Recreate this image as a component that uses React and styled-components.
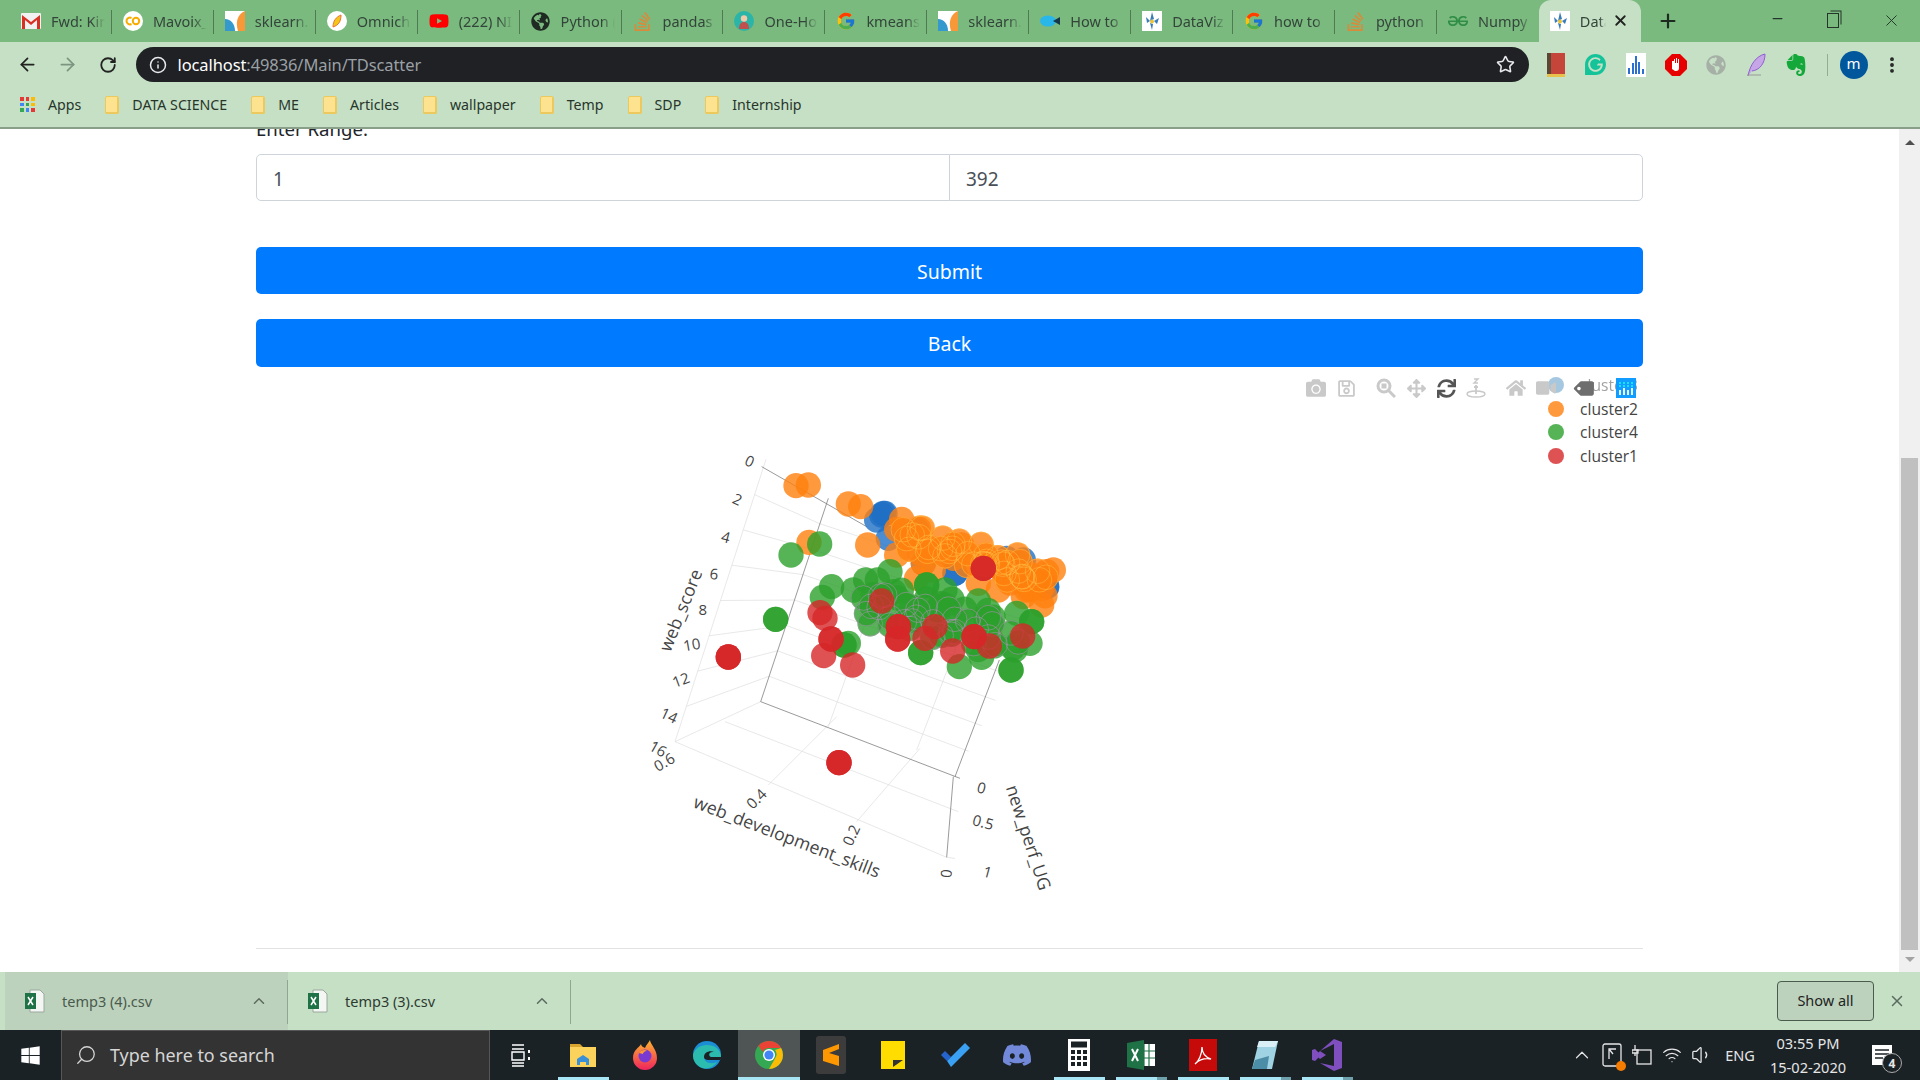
import React from "react";
import styled, { createGlobalStyle } from "styled-components";
import { ArrowLeft, ArrowRight, RotateCw, Info, Star, Plus, X, Minus, ChevronUp, EllipsisVertical, Search, Volume1, Wifi } from "lucide-react";
import { FaCamera, FaRegSave, FaHome, FaVideo, FaTag, FaSync, FaArrowsAlt, FaGlobeAmericas, FaYoutube, FaWindows } from "react-icons/fa";
import { FcGoogle } from "react-icons/fc";
import { SiStackoverflow, SiGeeksforgeeks, SiGrammarly, SiEvernote, SiDiscord } from "react-icons/si";

const UI = `"Noto Sans", "Open Sans", sans-serif`;

const Global = createGlobalStyle`
  html, body { margin: 0; padding: 0; height: 100%; overflow: hidden; background: #fff; }
  * { box-sizing: border-box; }
  #root { height: 1080px; }
`;

const Screen = styled.div`
  width: 1920px;
  height: 1080px;
  display: flex;
  flex-direction: column;
  font-family: ${UI};
  overflow: hidden;
`;

// browser chrome //
const TabStrip = styled.div`
  height: 42px;
  background: #7aba7e;
  display: flex;
  align-items: stretch;
  padding-left: 10px;
`;

const Tab = styled.div`
  width: ${(p) => (p.$active ? "102px" : "101.93px")};
  flex: none;
  display: flex;
  align-items: center;
  gap: 10px;
  padding-left: 11px;
  position: relative;
  background: ${(p) => (p.$active ? "#c5e0c5" : "transparent")};
  border-radius: ${(p) => (p.$active ? "12px 12px 0 0" : "0")};

  &::after {
    content: "";
    display: ${(p) => (p.$plain ? "none" : "block")};
    position: absolute;
    right: 0;
    top: 10px;
    bottom: 8px;
    width: 1px;
    background: #4f7a52;
  }
`;

const TabTitle = styled.span`
  font-size: 14.5px;
  color: #33443a;
  white-space: nowrap;
  width: ${(p) => (p.$active ? "26px" : "54px")};
  overflow: hidden;
  -webkit-mask-image: linear-gradient(to right, #000 75%, transparent);
  mask-image: linear-gradient(to right, #000 75%, transparent);
`;

const IconSlot = styled.span`
  width: 20px;
  height: 20px;
  flex: none;
  display: flex;
  align-items: center;
  justify-content: center;
`;

const TabClose = styled(X)`
  position: absolute;
  right: 12px;
  top: 12px;
  color: #222;
`;

const NewTab = styled.div`
  width: 54px;
  display: flex;
  align-items: center;
  justify-content: center;
  color: #1d2a20;
`;

const WindowButtons = styled.div`
  margin-left: auto;
  display: flex;
  color: #24352a;
`;

const WindowButton = styled.div`
  width: 57px;
  display: flex;
  align-items: flex-start;
  justify-content: center;
  padding-top: 11px;
`;

const RestoreIcon = styled.span`
  width: 12px;
  height: 15px;
  margin: 2px 4px 0 0;
  border: 1.5px solid #24352a;
  box-shadow: 2px -2px 0 -0.5px #7aba7e, 3px -3px 0 -0.5px #24352a;
`;

const Toolbar = styled.div`
  height: 45px;
  background: #c5e0c5;
  display: flex;
  align-items: center;
  padding: 0 0 0 7px;
`;

const NavButton = styled.div`
  width: 40.5px;
  display: flex;
  justify-content: center;
  color: ${(p) => (p.$off ? "#7d9580" : "#222")};
`;

const AddressBar = styled.div`
  width: 1393px;
  height: 35px;
  margin-left: 7px;
  border-radius: 18px;
  background: #202124;
  display: flex;
  align-items: center;
  padding: 0 14px 0 13px;
  color: #e8eaed;
`;

const Url = styled.div`
  margin-left: 11px;
  font-size: 16.5px;
  color: #9aa0a6;
  flex: 1;
  letter-spacing: -0.1px;
  b { font-weight: 400; color: #fff; }
`;

const Extensions = styled.div`
  display: flex;
  align-items: center;
  margin-left: 7px;
`;

const Extension = styled.div`
  width: 40px;
  height: 26px;
  display: flex;
  align-items: center;
  justify-content: center;
`;

const ToolDivider = styled.div`
  width: 1px;
  height: 22px;
  background: #94ab96;
  margin: 0 12px 0 11px;
`;

const Avatar = styled.div`
  width: 28px;
  height: 28px;
  border-radius: 50%;
  background: #01579b;
  color: #fff;
  font-size: 15px;
  display: flex;
  align-items: center;
  justify-content: center;
  padding-bottom: 3px;
`;

const MenuDots = styled.div`
  margin-left: 14px;
  color: #222;
  display: flex;
`;

const Bookmarks = styled.div`
  height: 42px;
  background: #c5e0c5;
  border-bottom: 2px solid #8a9f8a;
  display: flex;
  align-items: center;
  padding: 0 0 5px 20px;
  font-size: 14.2px;
  color: #28352b;
`;

const Bookmark = styled.div`
  display: flex;
  align-items: center;
  gap: 13px;
  margin-right: 24px;
  white-space: nowrap;
`;

const AppsGrid = styled.div`
  width: 15px;
  height: 15px;
  display: grid;
  grid-template-columns: repeat(3, 1fr);
  gap: 2px;
`;

const AppDot = styled.i`
  background: ${(p) => p.$c};
`;

const Folder = styled.span`
  width: 14px;
  height: 18px;
  background: #fde38f;
  border: 1px solid #ecc95e;
  border-radius: 2px 2px 1px 1px;
  box-shadow: inset -3px -3px 0 -2px #ecc95e;
`;

// page //
const Viewport = styled.div`
  flex: 1;
  min-height: 0;
  display: flex;
  background: #fff;
`;

const Page = styled.div`
  flex: 1;
  overflow: hidden;
  padding: 0 256px;
`;

const Form = styled.div`
  width: 1387px;
  margin-top: -15px;
`;

const Label = styled.div`
  font-size: 18.6px;
  line-height: 30px;
  color: #212529;
  margin-bottom: 10px;
`;

const InputGroup = styled.div`
  display: flex;
  margin-bottom: 46px;
`;

const Field = styled.input`
  flex: 1;
  width: 50%;
  height: 47px;
  border: 1px solid #ced4da;
  margin-left: ${(p) => (p.$second ? "-1px" : "0")};
  border-radius: ${(p) => (p.$second ? "0 5px 5px 0" : "5px 0 0 5px")};
  padding: 3px 16px 0;
  font: 19px ${UI};
  color: #495057;
  background: #fff;
  outline: none;
`;

const Button = styled.div`
  height: ${(p) => p.$h}px;
  margin-bottom: ${(p) => p.$mb}px;
  background: #007bff;
  border-radius: 5px;
  color: #fff;
  font-size: 19.5px;
  display: flex;
  align-items: center;
  justify-content: center;
  padding-top: ${(p) => p.$pt}px;
`;

const ChartBox = styled.div`
  position: relative;
  height: 582px;
  padding: 63px 0 0 384px;
  border-bottom: 1px solid #e2e2e2;
`;

const ModeBar = styled.div`
  position: absolute;
  top: 11px;
  right: 7px;
  display: flex;
  z-index: 2;
`;

const ModeGroup = styled.div`
  display: flex;
  gap: 10px;
  margin-left: ${(p) => (p.$first ? "0" : "20px")};
`;

const ModeIcon = styled.div`
  width: 20px;
  height: 20px;
  display: flex;
  align-items: center;
  justify-content: center;
  color: ${(p) => p.$c || "#c9c9c9"};
`;

const Legend = styled.div`
  position: absolute;
  top: 6px;
  left: 1292px;
  font-family: "Open Sans", sans-serif;
  font-size: 15.6px;
  color: #444;
`;

const LegendRow = styled.div`
  height: 23.7px;
  display: flex;
  align-items: center;
  gap: 16px;
  opacity: ${(p) => (p.$off ? 0.5 : 1)};
`;

const LegendDot = styled.span`
  width: 16px;
  height: 16px;
  border-radius: 50%;
  background: ${(p) => p.$c};
  opacity: 0.8;
`;

const Scrollbar = styled.div`
  width: 21px;
  background: #f0f0f0;
  display: flex;
  flex-direction: column;
  align-items: center;
  padding-top: 11px;
`;

const ArrowUp = styled.div`
  border: 5px solid transparent;
  border-top: 0;
  border-bottom: 5px solid #505050;
`;

const Thumb = styled.div`
  width: 17px;
  height: 492px;
  margin-top: 313px;
  background: #c0c0c0;
`;

const ArrowDown = styled.div`
  margin-top: 7px;
  border: 5px solid transparent;
  border-bottom: 0;
  border-top: 5px solid #a3a3a3;
`;

// downloads bar //
const Downloads = styled.div`
  height: 58px;
  background: #c5e0c5;
  display: flex;
  align-items: center;
  padding-left: 5px;
  font-size: 14.5px;
  color: #36453a;
`;

const DownloadItem = styled.div`
  width: 283px;
  height: 100%;
  flex: none;
  display: flex;
  align-items: center;
  padding: 0 0 0 20px;
  position: relative;
  background: ${(p) => (p.$hover ? "#bcd2bc" : "transparent")};

  &::after {
    content: "";
    position: absolute;
    right: 0;
    top: 8px;
    bottom: 6px;
    width: 1px;
    background: #8fa791;
  }
`;

const FileName = styled.span`
  margin-left: 17px;
  flex: 1;
  color: ${(p) => (p.$hover ? "#4a5a4e" : "#2e3a31")};
`;

const Chevron = styled(ChevronUp)`
  margin-right: 20px;
  color: #5d6b60;
`;

const ShowAll = styled.div`
  margin-left: auto;
  width: 97px;
  height: 40px;
  border: 1px solid #4b5c4e;
  border-radius: 4px;
  background: #bcd2bc;
  display: flex;
  align-items: center;
  justify-content: center;
  color: #222;
  font-size: 14.5px;
  padding-bottom: 2px;
`;

const CloseBar = styled(X)`
  margin: 0 14px 0 14px;
  color: #5d6b60;
`;

// taskbar //
const Taskbar = styled.div`
  height: 50px;
  background: #1b2226;
  display: flex;
  align-items: stretch;
  color: #fff;
`;

const StartButton = styled.div`
  width: 61px;
  display: flex;
  align-items: center;
  justify-content: center;
`;

const SearchBox = styled.div`
  width: 429px;
  background: #333;
  border: 1px solid #575757;
  border-bottom: 0;
  display: flex;
  align-items: center;
  padding: 0 0 2px 13px;
  gap: 13px;
  font-size: 17.9px;
  color: #d6d6d6;
`;

const TaskButton = styled.div`
  width: 62px;
  position: relative;
  display: flex;
  align-items: center;
  justify-content: center;
  background: ${(p) => (p.$active ? "#4f5455" : "transparent")};

  &::after {
    content: "";
    display: ${(p) => (p.$run ? "block" : "none")};
    position: absolute;
    bottom: 0;
    left: ${(p) => (p.$active ? "0" : "5.5px")};
    right: ${(p) => (p.$active ? "0" : "5.5px")};
    height: 3px;
    background: ${(p) =>
      p.$multi
        ? "linear-gradient(to right, #a9e6f5 80%, #6fa1ad 80%)"
        : "#a9e6f5"};
  }
`;

const Tray = styled.div`
  margin-left: auto;
  padding-right: 13px;
  display: flex;
  align-items: center;
  font-size: 14.5px;
  color: #e6e6e6;
`;

const TrayIcon = styled.div`
  width: 30px;
  display: flex;
  justify-content: center;
  position: relative;
`;

const TrayBadge = styled.i`
  position: absolute;
  right: 1px;
  bottom: -4px;
  width: 10px;
  height: 10px;
  border-radius: 50%;
  background: #f57c00;
`;

const Lang = styled.div`
  width: 46px;
  text-align: center;
`;

const Clock = styled.div`
  width: 90px;
  text-align: center;
  line-height: 24px;
  font-size: 14.6px;
`;

const Notify = styled.div`
  width: 50px;
  margin-left: 4px;
  position: relative;
  display: flex;
  justify-content: center;
`;

const NotifyCount = styled.span`
  position: absolute;
  left: 25px;
  top: 8px;
  width: 20px;
  height: 20px;
  border-radius: 50%;
  background: #1b2226;
  border: 1px solid #aaa;
  font-size: 12px;
  font-weight: 700;
  display: flex;
  align-items: center;
  justify-content: center;
`;

// small drawings //
const Gmail = () => (
  <svg width="20" height="16" viewBox="0 0 20 16">
    <rect width="20" height="16" rx="1" fill="#f1f1f1" />
    <path d="M1 16V2l9 7 9-7v14h-3V7l-6 5-6-5v9z" fill="#d93025" />
  </svg>
);
const Colab = () => (
  <svg width="20" height="20" viewBox="0 0 20 20">
    <circle cx="10" cy="10" r="10" fill="#fff" />
    <path d="M8.5 7a3.4 3.4 0 1 0 0 6" stroke="#f9ab00" strokeWidth="2" fill="none" />
    <circle cx="13" cy="10" r="3.2" stroke="#f9ab00" strokeWidth="2" fill="none" />
  </svg>
);
const Sklearn = () => (
  <svg width="20" height="20" viewBox="0 0 20 20">
    <rect width="20" height="20" fill="#fff" />
    <path d="M0 8c6 0 10 5 10 12H0z" fill="#3499cd" />
    <path d="M20 0v20h-7C10 10 13 3 20 0z" fill="#f89939" />
  </svg>
);
const Omni = () => (
  <svg width="20" height="20" viewBox="0 0 20 20">
    <circle cx="10" cy="10" r="10" fill="#fff" />
    <path d="M6 16c0-6 3-10 8-12 0 6-2 10-8 12z" fill="#f5c518" stroke="#e8743b" strokeWidth="1" />
  </svg>
);
const OneHot = () => (
  <svg width="20" height="20" viewBox="0 0 20 20">
    <circle cx="10" cy="10" r="10" fill="#2bb5a8" />
    <circle cx="10" cy="7.5" r="3.2" fill="#f0c9a8" />
    <path d="M5 18c0-5 2-7 5-7s5 2 5 7z" fill="#c0504d" />
  </svg>
);
const Kite = () => (
  <svg width="20" height="14" viewBox="0 0 20 14">
    <ellipse cx="8" cy="7" rx="8" ry="5.5" fill="#29b6e8" />
    <path d="M13 7l7-4v8z" fill="#16384a" />
  </svg>
);
const DataViz = () => (
  <svg width="20" height="20" viewBox="0 0 20 20">
    <rect width="20" height="20" fill="#fff" />
    <path d="M10 1l2 7-4 2 2-9zM4 6l4 4-3 2zM12 10l5-3-2 6zM8 12l3 1-1 6z" fill="#3a7cb8" />
    <circle cx="10" cy="10.5" r="2" fill="#e9c43a" />
  </svg>
);
const Stack = () => <SiStackoverflow size={19} color="#d98a3a" />;

const ExcelFile = () => (
  <svg width="20" height="24" viewBox="0 0 20 24">
    <path d="M5 1h10l4 4v18H5z" fill="#f4f6f4" stroke="#9aa89c" />
    <rect y="4" width="11" height="16" fill="#1f7246" />
    <path d="M3 8l5 8M8 8l-5 8" stroke="#fff" strokeWidth="1.5" />
  </svg>
);

const PlotlyLogo = () => (
  <svg width="20" height="20" viewBox="0 0 20 20">
    <rect width="20" height="20" fill="#119dff" />
    {[4, 8, 12, 16].map((x) => (
      <g key={x}>
        <circle cx={x} cy="5" r="0.9" fill="#25fefd" />
        <circle cx={x} cy="8" r="0.9" fill="#25fefd" />
        <rect x={x - 0.9} y={x % 8 === 0 ? 10 : 12} width="1.8" height={x % 8 === 0 ? 7 : 5} fill="#fff" />
      </g>
    ))}
  </svg>
);

const ZoomGlass = () => (
  <svg width="20" height="20" viewBox="0 0 20 20">
    <circle cx="8" cy="8" r="6" fill="none" stroke="#c9c9c9" strokeWidth="3" />
    <rect x="5.5" y="5.5" width="5" height="5" fill="#c9c9c9" />
    <path d="M12.5 12.5L19 19" stroke="#c9c9c9" strokeWidth="3" />
  </svg>
);

const Turntable = () => (
  <svg width="20" height="20" viewBox="0 0 20 20" fill="none" stroke="#c9c9c9" strokeWidth="1.4">
    <path d="M8 1h4l-4 4h4" />
    <path d="M10 7v9M8 9h4" strokeWidth="1.8" />
    <ellipse cx="10" cy="16" rx="9" ry="3" />
  </svg>
);

const Explorer = () => (
  <svg width="28" height="28" viewBox="0 0 28 28">
    <path d="M1 3h10l3 3H1z" fill="#d9a52e" />
    <rect x="1" y="6" width="26" height="20" fill="#fbd35c" />
    <path d="M8 24v-6l6-4 6 4v6h-3v-3h-6v3z" fill="#3a8fd9" />
  </svg>
);
const Firefox = () => (
  <svg width="28" height="30" viewBox="0 0 28 30">
    <defs>
      <linearGradient id="ffx" x1="0" y1="0" x2="0" y2="1">
        <stop offset="0" stopColor="#ffb52e" />
        <stop offset="1" stopColor="#f0245e" />
      </linearGradient>
    </defs>
    <path d="M2 18C2 10 8 8 10 4c0 2 2 3 4 4 1-3 4-6 5-8 0 4 7 9 7 18a12 12 0 0 1-24 0z" fill="url(#ffx)" />
    <circle cx="14" cy="16" r="6.5" fill="#7a3ad1" />
    <path d="M8 13c2-3 6-4 8-2-3 0-4 2-4 3z" fill="#ff9b2e" />
  </svg>
);
const Edge = () => (
  <svg width="30" height="30" viewBox="0 0 30 30">
    <circle cx="15" cy="15" r="14" fill="#1b8ed6" />
    <path d="M1 15C3 6 13 3 21 6c5 2 8 6 8 11H12c0 5 6 8 13 5-4 6-12 8-17 5C3 24 1 20 1 15z" fill="#2fc8a5" opacity="0.8" />
    <path d="M12 17c0-5 6-7 10-5-6-1-6 5-2 5z" fill="#1b2226" />
    <path d="M12 17h17c0 1 0 2-1 3H16c-2 0-4-1-4-3z" fill="#1b2226" />
  </svg>
);
const Chrome = () => (
  <svg width="28" height="28" viewBox="0 0 28 28">
    <circle cx="14" cy="14" r="14" fill="#34a853" />
    <path d="M14 0a14 14 0 0 1 12.1 7H14a7 7 0 0 0-6.4 4L3.5 4.7A14 14 0 0 1 14 0z" fill="#ea4335" />
    <path d="M26.1 7A14 14 0 0 1 14 28l6-10.5A7 7 0 0 0 20 9z" fill="#fbbc05" />
    <circle cx="14" cy="14" r="6" fill="#fff" />
    <circle cx="14" cy="14" r="4.6" fill="#4285f4" />
  </svg>
);
const Sublime = () => (
  <svg width="30" height="38" viewBox="0 0 30 38">
    <rect width="30" height="38" rx="3" fill="#3c3c3c" />
    <path d="M23 8L7 14v6l16 5v-5L13 17l10-4zM7 20v5l16 5v-5z" fill="#ff9800" />
  </svg>
);
const Sticky = () => (
  <svg width="24" height="28" viewBox="0 0 24 28">
    <rect width="24" height="28" fill="#ffdd00" />
    <path d="M12 26v-7h10z" fill="#333" />
  </svg>
);
const Todo = () => (
  <svg width="30" height="26" viewBox="0 0 30 26">
    <path d="M1 13l4-4 6 6-4 4z" fill="#2564cf" />
    <path d="M7 19L25 1l5 5-19 19z" fill="#3aa0f3" />
  </svg>
);
const Calc = () => (
  <svg width="22" height="32" viewBox="0 0 22 32">
    <rect width="22" height="32" fill="#fff" />
    <rect x="3" y="2.5" width="16" height="6" fill="#1b2226" />
    {[11, 17, 23].map((y) =>
      [3, 9, 15].map((x) => <rect key={`${x}${y}`} x={x} y={y} width="4" height="4" fill="#1b2226" />)
    )}
  </svg>
);
const Excel = () => (
  <svg width="28" height="30" viewBox="0 0 28 30">
    <rect x="13" y="4" width="15" height="22" fill="#fff" />
    <path d="M17 4v22M22 4v22M13 11h15M13 18h15" stroke="#1f7246" strokeWidth="1.2" />
    <path d="M0 3l17-3v30L0 27z" fill="#1f7246" />
    <path d="M5 9l6 12M11 9l-6 12" stroke="#fff" strokeWidth="2" />
  </svg>
);
const Acrobat = () => (
  <svg width="28" height="32" viewBox="0 0 28 32">
    <rect width="28" height="32" fill="#c60a0a" />
    <path d="M6 25c4-3 7-10 7-17 0 6 3 10 9 12-6-1-11 0-16 5z" fill="none" stroke="#fff" strokeWidth="1.3" />
  </svg>
);
const Notepad = () => (
  <svg width="28" height="30" viewBox="0 0 28 30">
    <path d="M8 1h19l-6 28H1z" fill="#9fd2e2" />
    <path d="M8 1h19l-3 6H6z" fill="#d9eef5" />
    <path d="M4 20l14-4-2 13H1z" fill="#4b8da6" />
  </svg>
);
const VStudio = () => (
  <svg width="30" height="32" viewBox="0 0 30 32">
    <path d="M22 0l8 3v26l-8 3L8 24l14 3V5L8 12zM0 11l3-1 6 6-6 6-3-1z" fill="#7f4fc0" />
    <path d="M8 12l6 4-6 4-4-4z" fill="#7f4fc0" />
  </svg>
);
const BookIcon = () => (
  <svg width="18" height="24" viewBox="0 0 18 24">
    <rect width="18" height="22" fill="#c5453b" />
    <rect width="4" height="22" fill="#5a4632" />
    <rect x="0" y="21" width="18" height="3" fill="#e8c14b" />
  </svg>
);
const BarsIcon = () => (
  <svg width="20" height="24" viewBox="0 0 20 24">
    <rect width="20" height="24" fill="#fff" />
    <path d="M3 21v-6M7 21V10M10 21V3M13 21V9M17 21v-5" stroke="#2a6fd1" strokeWidth="2" />
  </svg>
);
const StopHand = () => (
  <svg width="22" height="22" viewBox="0 0 22 22">
    <path d="M7 0h8l7 7v8l-7 7H7l-7-7V7z" fill="#e60000" />
    <path d="M7 15V7h2V5h1v4h1V4h1v5h1V5h1v9c0 2-1 3-3 3H10z" fill="#fff" />
  </svg>
);
const Globe = () => <FaGlobeAmericas size={20} color="#a6b0a6" />;
const Feather = () => (
  <svg width="20" height="24" viewBox="0 0 20 24">
    <path d="M2 23C4 12 10 3 19 1c0 9-5 16-13 17" fill="#c7a6e8" stroke="#8f5fd0" />
    <path d="M1 22h14" stroke="#999" />
  </svg>
);
const TaskView = () => (
  <svg width="20" height="24" viewBox="0 0 20 24" fill="none" stroke="#fff" strokeWidth="1.4">
    <path d="M1 2h12M1 6h12M1 9h12v8H1zM1 20h12M1 23h12" />
    <path d="M18 7v3M18 14v3" strokeWidth="2" />
  </svg>
);
const ChargeIcon = () => (
  <svg width="20" height="22" viewBox="0 0 20 22" fill="none" stroke="#e6e6e6" strokeWidth="1.3">
    <rect x="5" y="6" width="14" height="14" />
    <path d="M3 1v5M0 6h6v3H0zM3 9v3" />
  </svg>
);
const NoteIcon = () => (
  <svg width="22" height="20" viewBox="0 0 22 20">
    <rect x="1" y="0" width="20" height="20" fill="#fff" />
    <path d="M4 5h14M4 9h14M4 13h8" stroke="#1b2226" strokeWidth="1.5" />
  </svg>
);
const StorageIcon = () => (
  <svg width="20" height="24" viewBox="0 0 20 24" fill="none" stroke="#e6e6e6" strokeWidth="1.3">
    <rect x="1" y="1" width="18" height="22" rx="2" />
    <path d="M14 6H7v10M7 6l4 5" />
  </svg>
);

// scatter data in chart units (3 per screen pixel) //
const band = (from, to, count, offsets) =>
  offsets.flatMap(([dx, dy], o) =>
    Array.from({ length: count }, (_, i) => {
      const t = (i + (o % 2) * 0.5) / (count - 1);
      return [
        from[0] + (to[0] - from[0]) * t + dx + 16 * Math.sin(i * 2.3 + o),
        from[1] + (to[1] - from[1]) * t + dy + 14 * Math.cos(i * 1.7 + o * 2),
      ];
    })
  );

const ORANGE = [
  [468, 167], [505, 165], [625, 222], [662, 230], [507, 337], [683, 345], [770, 375], [785, 268], [770, 298],
  [840, 370], [850, 400], [880, 420], [830, 445], [940, 385], [965, 345], [1075, 480], [1015, 460], [1150, 500],
  [1205, 525], [1240, 420], [1220, 425], [1175, 435], [1205, 475], [1160, 480], [1170, 450], [1050, 620],
  ...band([790, 285], [1190, 410], 12, [[0, 0], [-5, 30], [-5, 50]]),
  ...band([1040, 380], [1200, 470], 6, [[0, 0], [0, 25]]),
];
const BLUE = [
  [730, 250], [710, 270], [725, 255], [735, 250], [745, 325], [830, 300], [945, 430], [945, 430], [1030, 410],
  [1030, 415], [1100, 385], [1150, 390], [1220, 470], [1220, 470], [850, 400], [940, 380],
];
const GREEN = [
  [750, 425], [539, 342], [453, 375], [575, 470], [547, 502], [407, 568], [407, 568], [640, 480], [677, 450],
  [712, 450], [1130, 550], [1175, 575], [1175, 575], [1170, 640], [1125, 660], [1113, 720], [1113, 720], [958, 710],
  [1025, 682], [842, 668], [842, 668], [625, 640], [612, 645], [612, 645], [860, 465], [860, 465], [915, 480],
  ...band([670, 490], [1110, 595], 12, [[0, 0], [-10, 40], [-5, 70]]),
  ...band([700, 480], [1050, 530], 8, [[0, 0], [0, 25]]),
];
const RED = [
  [725, 513], [1030, 415], [1030, 415], [540, 548], [555, 565], [573, 627], [573, 627], [551, 677], [638, 705],
  [775, 590], [773, 627], [775, 590], [773, 627], [885, 590], [855, 625], [938, 663], [1002, 620], [1002, 620],
  [1048, 648], [1148, 618], [265, 681], [265, 681], [265, 681], [597, 998], [597, 998], [597, 998],
];
const GREEN_RINGS = GREEN.slice(27, 60);
const ORANGE_RINGS = ORANGE.slice(26, 66);

const lerp = (a, b, t) => [a[0] + (b[0] - a[0]) * t, a[1] + (b[1] - a[1]) * t];
const LEFT_TOP = [378, 88];
const LEFT_BOTTOM = [105, 935];
const MID_TOP = [565, 205];
const MID_BOTTOM = [362, 815];
const RIGHT_TOP = [1270, 430];
const RIGHT_BOTTOM = [945, 1040];

const WALL_TICKS = [0.125, 0.25, 0.375, 0.5, 0.625, 0.75, 0.875];

const GRID = [
  [LEFT_TOP, LEFT_BOTTOM],
  [LEFT_BOTTOM, [920, 1282]],
  [LEFT_BOTTOM, MID_BOTTOM],
  [[255, 875], [955, 1145]],
  [[385, 1065], [590, 860]],
  [[650, 1175], [840, 955]],
  [[920, 1282], [945, 1285]],
  [[565, 890], [690, 540]],
  [[830, 960], [960, 620]],
  ...WALL_TICKS.map((t) => [lerp(LEFT_TOP, LEFT_BOTTOM, t), lerp(MID_TOP, MID_BOTTOM, t)]),
  ...WALL_TICKS.map((t) => [lerp(MID_TOP, MID_BOTTOM, t), lerp(RIGHT_TOP, RIGHT_BOTTOM, t)]),
];

const AXES = [
  [[365, 110], [680, 290]],
  [MID_TOP, MID_BOTTOM],
  [MID_BOTTOM, [960, 1045]],
  [RIGHT_BOTTOM, [1078, 690]],
  [[940, 1040], [920, 1282]],
];

const TICKS = [
  { t: "0", x: 330, y: 92, r: 25 },
  { t: "2", x: 293, y: 207, r: 25 },
  { t: "4", x: 258, y: 320, r: 15 },
  { t: "6", x: 222, y: 430, r: 5 },
  { t: "8", x: 188, y: 538, r: 0 },
  { t: "10", x: 155, y: 642, r: -10 },
  { t: "12", x: 122, y: 748, r: -20 },
  { t: "14", x: 88, y: 855, r: 25 },
  { t: "16", x: 55, y: 955, r: 30 },
  { t: "0.6", x: 72, y: 995, r: -30 },
  { t: "0.4", x: 348, y: 1105, r: -45 },
  { t: "0.2", x: 632, y: 1215, r: -65 },
  { t: "0", x: 917, y: 1330, r: -85 },
  { t: "0", x: 1025, y: 1072, r: 15 },
  { t: "0.5", x: 1030, y: 1175, r: 15 },
  { t: "1", x: 1043, y: 1325, r: 15 },
];

const TITLES = [
  { t: "web_score", x: 120, y: 540, r: -68 },
  { t: "web_development_skills", x: 442, y: 1218, r: 21 },
  { t: "new_perf_UG", x: 1168, y: 1222, r: 72 },
];

const Scatter3D = () => (
  <svg width="460" height="470" viewBox="0 0 1380 1410" fontFamily="'Open Sans', sans-serif" fill="#444">
    {GRID.map(([a, b], i) => (
      <line key={i} x1={a[0]} y1={a[1]} x2={b[0]} y2={b[1]} stroke="#dcdcdc" strokeWidth="2" />
    ))}
    {AXES.map(([a, b], i) => (
      <line key={i} x1={a[0]} y1={a[1]} x2={b[0]} y2={b[1]} stroke="#666" strokeWidth="2" />
    ))}
    {BLUE.map(([x, y], i) => (
      <circle key={i} cx={x} cy={y} r="38" fill="#1f6fc4" opacity="0.8" />
    ))}
    {ORANGE.map(([x, y], i) => (
      <circle key={i} cx={x} cy={y} r="38" fill="#ff7f0e" opacity="0.8" />
    ))}
    {ORANGE_RINGS.map(([x, y], i) => (
      <circle key={i} cx={x} cy={y} r="37" fill="none" stroke="#ffc24d" strokeWidth="2.5" opacity="0.6" />
    ))}
    {GREEN.map(([x, y], i) => (
      <circle key={i} cx={x} cy={y} r="38" fill="#2ca02c" opacity="0.8" />
    ))}
    {GREEN_RINGS.map(([x, y], i) => (
      <circle key={i} cx={x} cy={y} r="37" fill="none" stroke="#cf8ad8" strokeWidth="2.5" opacity="0.55" />
    ))}
    {RED.map(([x, y], i) => (
      <circle key={i} cx={x} cy={y} r="38" fill="#d62728" opacity="0.8" />
    ))}
    {TICKS.map(({ t, x, y, r }, i) => (
      <text key={i} x={x} y={y} fontSize="45" textAnchor="middle" dominantBaseline="central" transform={`rotate(${r} ${x} ${y})`}>
        {t}
      </text>
    ))}
    {TITLES.map(({ t, x, y, r }) => (
      <text key={t} x={x} y={y} fontSize="53" textAnchor="middle" dominantBaseline="central" transform={`rotate(${r} ${x} ${y})`}>
        {t}
      </text>
    ))}
  </svg>
);

const TABS = [
  { title: "Fwd: Kir", icon: <Gmail /> },
  { title: "Mavoix_", icon: <Colab /> },
  { title: "sklearn.", icon: <Sklearn /> },
  { title: "Omnich", icon: <Omni /> },
  { title: "(222) NI", icon: <FaYoutube size={20} color="#f00" /> },
  { title: "Python (", icon: <FaGlobeAmericas size={19} color="#1e2a22" /> },
  { title: "pandas", icon: <Stack /> },
  { title: "One-Ho", icon: <OneHot /> },
  { title: "kmeans", icon: <FcGoogle size={20} /> },
  { title: "sklearn.", icon: <Sklearn /> },
  { title: "How to", icon: <Kite /> },
  { title: "DataViz", icon: <DataViz /> },
  { title: "how to", icon: <FcGoogle size={20} /> },
  { title: "python", icon: <Stack /> },
  { title: "Numpy", icon: <SiGeeksforgeeks size={20} color="#2f8d46" />, plain: true },
];

const FOLDERS = ["DATA SCIENCE", "ME", "Articles", "wallpaper", "Temp", "SDP", "Internship"];
const APP_COLORS = ["#e53935", "#e53935", "#fbbc05", "#4285f4", "#34a853", "#fbbc05", "#34a853", "#4285f4", "#e53935"];

const LEGEND = [
  { name: "cluster3", color: "#1f77b4", off: true },
  { name: "cluster2", color: "#ff7f0e" },
  { name: "cluster4", color: "#2ca02c" },
  { name: "cluster1", color: "#d62728" },
];

const TASK_APPS = [
  { icon: <Explorer />, run: true },
  { icon: <Firefox /> },
  { icon: <Edge /> },
  { icon: <Chrome />, run: true, active: true },
  { icon: <Sublime /> },
  { icon: <Sticky /> },
  { icon: <Todo /> },
  { icon: <SiDiscord size={28} color="#7289da" /> },
  { icon: <Calc />, run: true },
  { icon: <Excel />, run: true, multi: true },
  { icon: <Acrobat />, run: true },
  { icon: <Notepad />, run: true, multi: true },
  { icon: <VStudio />, run: true, multi: true },
];

export default function App() {
  return (
    <Screen>
      <Global />
      <TabStrip>
        {TABS.map((tab, i) => (
          <Tab key={i} $plain={tab.plain}>
            <IconSlot>{tab.icon}</IconSlot>
            <TabTitle>{tab.title}</TabTitle>
          </Tab>
        ))}
        <Tab $active $plain>
          <IconSlot>
            <DataViz />
          </IconSlot>
          <TabTitle $active>Data</TabTitle>
          <TabClose size={17} strokeWidth={2.6} />
        </Tab>
        <NewTab>
          <Plus size={22} strokeWidth={2.4} />
        </NewTab>
        <WindowButtons>
          <WindowButton>
            <Minus size={15} />
          </WindowButton>
          <WindowButton>
            <RestoreIcon />
          </WindowButton>
          <WindowButton>
            <X size={19} strokeWidth={1.2} />
          </WindowButton>
        </WindowButtons>
      </TabStrip>

      <Toolbar>
        <NavButton>
          <ArrowLeft size={21} />
        </NavButton>
        <NavButton $off>
          <ArrowRight size={21} />
        </NavButton>
        <NavButton>
          <RotateCw size={18} strokeWidth={2.4} />
        </NavButton>
        <AddressBar>
          <Info size={18} />
          <Url>
            <b>localhost</b>:49836/Main/TDscatter
          </Url>
          <Star size={19} />
        </AddressBar>
        <Extensions>
          <Extension>
            <BookIcon />
          </Extension>
          <Extension>
            <SiGrammarly size={21} color="#15c39a" />
          </Extension>
          <Extension>
            <BarsIcon />
          </Extension>
          <Extension>
            <StopHand />
          </Extension>
          <Extension>
            <Globe />
          </Extension>
          <Extension>
            <Feather />
          </Extension>
          <Extension>
            <SiEvernote size={22} color="#14a83a" />
          </Extension>
          <ToolDivider />
          <Avatar>m</Avatar>
          <MenuDots>
            <EllipsisVertical size={20} strokeWidth={2.6} />
          </MenuDots>
        </Extensions>
      </Toolbar>

      <Bookmarks>
        <Bookmark>
          <AppsGrid>
            {APP_COLORS.map((c, i) => (
              <AppDot key={i} $c={c} />
            ))}
          </AppsGrid>
          Apps
        </Bookmark>
        {FOLDERS.map((name) => (
          <Bookmark key={name}>
            <Folder />
            {name}
          </Bookmark>
        ))}
      </Bookmarks>

      <Viewport>
        <Page>
          <Form>
            <Label>Enter Range:</Label>
            <InputGroup>
              <Field defaultValue="1" />
              <Field $second defaultValue="392" />
            </InputGroup>
            <Button $h={47} $mb={25} $pt={2}>
              Submit
            </Button>
            <Button $h={48} $mb={0} $pt={0}>
              Back
            </Button>
            <ChartBox>
              <ModeBar>
                <ModeGroup $first>
                  <ModeIcon>
                    <FaCamera size={20} />
                  </ModeIcon>
                  <ModeIcon>
                    <FaRegSave size={19} />
                  </ModeIcon>
                </ModeGroup>
                <ModeGroup>
                  <ModeIcon>
                    <ZoomGlass />
                  </ModeIcon>
                  <ModeIcon>
                    <FaArrowsAlt size={19} />
                  </ModeIcon>
                  <ModeIcon $c="#555">
                    <FaSync size={19} />
                  </ModeIcon>
                  <ModeIcon>
                    <Turntable />
                  </ModeIcon>
                </ModeGroup>
                <ModeGroup>
                  <ModeIcon>
                    <FaHome size={20} />
                  </ModeIcon>
                  <ModeIcon>
                    <FaVideo size={20} />
                  </ModeIcon>
                </ModeGroup>
                <ModeGroup>
                  <ModeIcon $c="#6e6e6e">
                    <FaTag size={19} transform="rotate(-45)" />
                  </ModeIcon>
                </ModeGroup>
                <ModeGroup>
                  <PlotlyLogo />
                </ModeGroup>
              </ModeBar>
              <Legend>
                {LEGEND.map((row) => (
                  <LegendRow key={row.name} $off={row.off}>
                    <LegendDot $c={row.color} />
                    {row.name}
                  </LegendRow>
                ))}
              </Legend>
              <Scatter3D />
            </ChartBox>
          </Form>
        </Page>
        <Scrollbar>
          <ArrowUp />
          <Thumb />
          <ArrowDown />
        </Scrollbar>
      </Viewport>

      <Downloads>
        <DownloadItem $hover>
          <ExcelFile />
          <FileName $hover>temp3 (4).csv</FileName>
          <Chevron size={18} />
        </DownloadItem>
        <DownloadItem>
          <ExcelFile />
          <FileName>temp3 (3).csv</FileName>
          <Chevron size={18} />
        </DownloadItem>
        <ShowAll>Show all</ShowAll>
        <CloseBar size={18} />
      </Downloads>

      <Taskbar>
        <StartButton>
          <FaWindows size={21} />
        </StartButton>
        <SearchBox>
          <Search size={22} strokeWidth={1.4} transform="scale(-1 1)" />
          Type here to search
        </SearchBox>
        <TaskButton>
          <TaskView />
        </TaskButton>
        {TASK_APPS.map((app, i) => (
          <TaskButton key={i} $run={app.run} $active={app.active} $multi={app.multi}>
            {app.icon}
          </TaskButton>
        ))}
        <Tray>
          <TrayIcon>
            <ChevronUp size={22} strokeWidth={1.3} />
          </TrayIcon>
          <TrayIcon>
            <StorageIcon />
            <TrayBadge />
          </TrayIcon>
          <TrayIcon>
            <ChargeIcon />
          </TrayIcon>
          <TrayIcon>
            <Wifi size={20} strokeWidth={1.4} />
          </TrayIcon>
          <TrayIcon>
            <Volume1 size={22} strokeWidth={1.4} />
          </TrayIcon>
          <Lang>ENG</Lang>
          <Clock>
            03:55 PM
            <br />
            15-02-2020
          </Clock>
          <Notify>
            <NoteIcon />
            <NotifyCount>4</NotifyCount>
          </Notify>
        </Tray>
      </Taskbar>
    </Screen>
  );
}
